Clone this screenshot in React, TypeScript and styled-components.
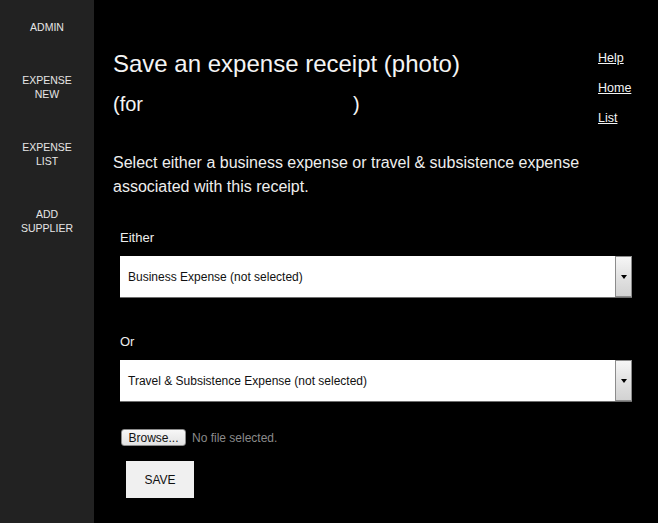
import React from "react";
import styled, { createGlobalStyle } from "styled-components";

const Global = createGlobalStyle`
  html, body { margin: 0; padding: 0; background: #000; }
  body { font-family: "Liberation Sans", Arial, sans-serif; }
`;

const Page = styled.div`
  display: flex;
  min-height: 523px;
  width: 658px;
`;

const Sidebar = styled.nav`
  width: 94px;
  flex: none;
  background: #222;
  display: flex;
  flex-direction: column;
  align-items: center;
  gap: 39px;
  padding-top: 20px;
  box-sizing: border-box;
`;

const SideItem = styled.a`
  font-size: 10.5px;
  line-height: 14px;
  color: #e6e6e6;
  text-align: center;
  text-transform: uppercase;
  text-decoration: none;
`;

const Main = styled.main`
  flex: 1;
  background: #000;
  padding-left: 19px;
  color: #f2f2f2;
`;

const Header = styled.div`
  display: grid;
  grid-template-columns: 1fr 60px;
`;

const TitleBlock = styled.div`
  padding-top: 50px;
`;

const Title = styled.h1`
  margin: 0;
  font-size: 24px;
  line-height: 28px;
  font-weight: normal;
  color: #f4f4f4;
`;

const Subtitle = styled.h2`
  margin: 14px 0 0;
  font-size: 20px;
  line-height: 24px;
  font-weight: normal;
  color: #f4f4f4;
`;

const Hidden = styled.span`
  display: inline-block;
  width: 210px;
`;

const Intro = styled.p`
  margin: 35px 0 0;
  font-size: 16px;
  line-height: 24px;
  color: #eeeeee;
`;

const Links = styled.div`
  display: flex;
  flex-direction: column;
  padding-top: 43px;
`;

const TopLink = styled.a`
  font-size: 12.5px;
  line-height: 30px;
  color: #f4f4f4;
  text-decoration: underline;
`;

const Form = styled.form`
  padding-left: 7px;
  padding-top: 31px;
`;

const Group = styled.div<{ $gap: number }>`
  margin-top: ${(p) => p.$gap}px;
`;

const Label = styled.div`
  font-size: 13px;
  line-height: 16px;
  color: #eeeeee;
  margin-bottom: 10px;
`;

const SelectBox = styled.div`
  width: 512px;
  height: 42px;
  display: flex;
  background: #fff;
  border-bottom: 1px solid #6e6e6e;
  box-sizing: border-box;
`;

const SelectValue = styled.div`
  flex: 1;
  display: flex;
  align-items: center;
  padding-left: 8px;
  font-size: 12px;
  color: #111;
`;

const DropButton = styled.div`
  width: 17px;
  flex: none;
  box-sizing: border-box;
  border: 1px solid #8c8c8c;
  background: linear-gradient(#f6f6f6, #e4e4e4 45%, #d2d2d2);
  display: flex;
  align-items: center;
  justify-content: center;
`;

const Arrow = styled.span`
  width: 0;
  height: 0;
  border-left: 3.5px solid transparent;
  border-right: 3.5px solid transparent;
  border-top: 4px solid #000;
  margin-top: 1px;
`;

const FileRow = styled.div`
  margin-top: 27px;
  display: flex;
  align-items: center;
  gap: 6px;
  padding-left: 1px;
`;

const BrowseButton = styled.button`
  height: 17px;
  width: 65px;
  padding: 0;
  font-family: "Liberation Sans", Arial, sans-serif;
  font-size: 12px;
  color: #111;
  background: linear-gradient(#f7f7f7, #e2e2e2);
  border: 1px solid #8a8a8a;
  border-radius: 3px;
`;

const FileHint = styled.span`
  font-size: 12px;
  color: #8a8a8a;
`;

const SaveButton = styled.button`
  display: block;
  margin: 15px 0 0 6px;
  width: 68px;
  height: 37px;
  padding: 0;
  border: none;
  background: #f0f0f0;
  font-family: "Liberation Sans", Arial, sans-serif;
  font-size: 12px;
  color: #111;
`;

function Select({ value }: { value: string }) {
  return (
    <SelectBox>
      <SelectValue>{value}</SelectValue>
      <DropButton>
        <Arrow />
      </DropButton>
    </SelectBox>
  );
}

export default function App() {
  return (
    <Page>
      <Global />
      <Sidebar>
        <SideItem>Admin</SideItem>
        <SideItem>
          Expense
          <br />
          New
        </SideItem>
        <SideItem>
          Expense
          <br />
          List
        </SideItem>
        <SideItem>
          Add
          <br />
          Supplier
        </SideItem>
      </Sidebar>
      <Main>
        <Header>
          <TitleBlock>
            <Title>Save an expense receipt (photo)</Title>
            <Subtitle>
              (for<Hidden />)
            </Subtitle>
            <Intro>
              Select either a business expense or travel &amp; subsistence expense associated with this receipt.
            </Intro>
          </TitleBlock>
          <Links>
            <TopLink>Help</TopLink>
            <TopLink>Home</TopLink>
            <TopLink>List</TopLink>
          </Links>
        </Header>
        <Form onSubmit={(e) => e.preventDefault()}>
          <Group $gap={0}>
            <Label>Either</Label>
            <Select value="Business Expense (not selected)" />
          </Group>
          <Group $gap={36}>
            <Label>Or</Label>
            <Select value="Travel & Subsistence Expense (not selected)" />
          </Group>
          <FileRow>
            <BrowseButton type="button">Browse...</BrowseButton>
            <FileHint>No file selected.</FileHint>
          </FileRow>
          <SaveButton type="submit">SAVE</SaveButton>
        </Form>
      </Main>
    </Page>
  );
}
